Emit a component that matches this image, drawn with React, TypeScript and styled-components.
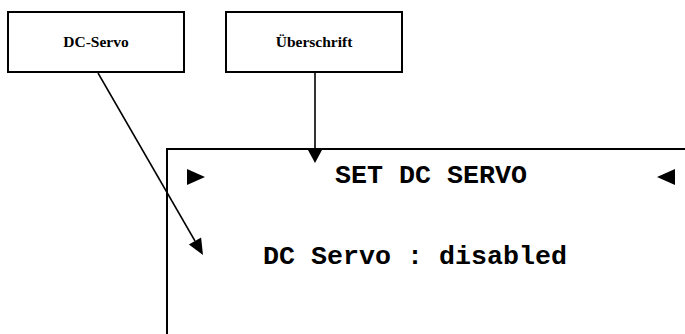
import React from "react";
import styled, { createGlobalStyle } from "styled-components";

const Global = createGlobalStyle`
  html, body { margin: 0; padding: 0; background: #fff; }
  #root { width: 685px; height: 334px; }
`;

const Page = styled.div`
  position: relative;
  width: 685px;
  height: 334px;
  overflow: hidden;
  background: #fff;
  display: flex;
  flex-direction: column;
`;

const LabelRow = styled.div`
  display: flex;
  gap: 40px;
  padding: 11px 0 0 7px;
`;

const LabelBox = styled.div`
  box-sizing: border-box;
  width: 178px;
  height: 62px;
  border: 2px solid #000;
  display: flex;
  align-items: center;
  justify-content: center;
  font-family: "Liberation Serif", "Times New Roman", serif;
  font-weight: bold;
  font-size: 15.5px;
  color: #000;
`;

const Display = styled.div`
  box-sizing: border-box;
  margin: 75px 0 0 166px;
  flex: 1;
  border-top: 2px solid #000;
  border-left: 2px solid #000;
  padding: 11px 10px 0 19px;
  font-family: "Courier New", "Nimbus Mono PS", "Nimbus Mono L", FreeMono, "Liberation Mono", monospace;
  font-weight: bold;
  font-size: 26.67px;
  line-height: 30px;
  color: #000;
`;

const HeaderRow = styled.div`
  display: flex;
  align-items: center;
  justify-content: space-between;
  height: 30px;
`;

const Title = styled.span`
  white-space: pre;
`;

const ValueLine = styled.div`
  margin-top: 51px;
  padding-left: 76px;
  white-space: pre;
`;

const Overlay = styled.svg`
  position: absolute;
  left: 0;
  top: 0;
  pointer-events: none;
`;

const Pointer = ({ dir }: { dir: "right" | "left" }) => (
  <svg width="18" height="16" viewBox="0 0 18 16" style={{ display: "block", marginTop: "1px" }}>
    {dir === "right" ? (
      <polygon points="0,0 18,8 0,16" fill="#000" />
    ) : (
      <polygon points="18,0 0,8 18,16" fill="#000" />
    )}
  </svg>
);

export default function App() {
  return (
    <>
      <Global />
      <Page>
        <LabelRow>
          <LabelBox>DC-Servo</LabelBox>
          <LabelBox>Überschrift</LabelBox>
        </LabelRow>
        <Display>
          <HeaderRow>
            <Pointer dir="right" />
            <Title>SET DC SERVO</Title>
            <Pointer dir="left" />
          </HeaderRow>
          <ValueLine>DC Servo : disabled</ValueLine>
        </Display>
        <Overlay width="685" height="334" viewBox="0 0 685 334">
          <line x1="98" y1="73" x2="195" y2="241" stroke="#000" strokeWidth="1.5" />
          <polygon points="203,255 188.9,244.6 201.1,237.6" fill="#000" />
          <line x1="315" y1="73" x2="315" y2="151" stroke="#000" strokeWidth="1.6" />
          <polygon points="315,163 308,150 322,150" fill="#000" />
        </Overlay>
      </Page>
    </>
  );
}
